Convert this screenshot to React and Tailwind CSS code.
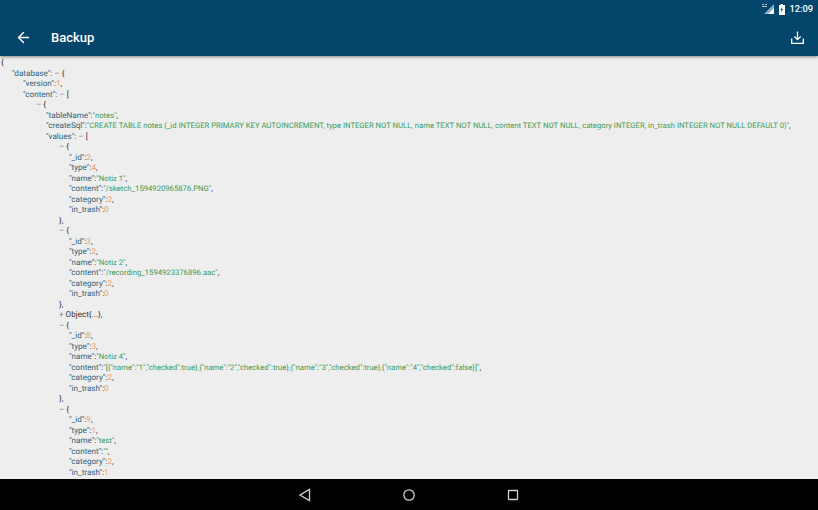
import { ArrowLeft } from 'lucide-react'

/* ─── Json tokens ───────────────────────────────────────────────── */
const K = ({ children }) => <span className="text-[#2f5f78]">"{children}"</span>
const N = ({ children }) => <span className="text-[#ee9c62]">{children}</span>
const S = ({ children }) => <span className="text-[7.7px] text-[#3f9a55]">"{children}"</span>
const Dash = () => <span className="text-[#777777]">– </span>

const Row = ({ className, children }) => (
  <div className={`h-[10.5px] leading-[10.5px] whitespace-nowrap ${className}`}>{children}</div>
)

const Field = ({ k, children, last }) => (
  <Row className="pl-[69px]">
    <K>{k}</K>:{children}{last ? '' : ','}
  </Row>
)

const Note = ({ id, type, name, content, inTrash }) => (
  <>
    <Row className="pl-[59px]"><Dash />{'{'}</Row>
    <Field k="_id"><N>{id}</N></Field>
    <Field k="type"><N>{type}</N></Field>
    <Field k="name"><S>{name}</S></Field>
    <Field k="content"><S>{content}</S></Field>
    <Field k="category"><N>2</N></Field>
    <Field k="in_trash" last><N>{inTrash}</N></Field>
  </>
)

const StatusIcons = () => (
  <svg width="23" height="12" viewBox="0 0 23 12" fill="none">
    <path d="M0 1h2v1H0zM3 1h2v1H3zM0 3h5v1H0z" fill="#b8c6d0" />
    <path d="M12 1v10H2z" fill="#ffffff" opacity="0.55" />
    <path d="M12 5v6H6z" fill="#ffffff" />
    <path d="M17 2h1.5V1h2.5v1H23v10h-6z" fill="#ffffff" />
    <path d="M20.2 3.5l-1.6 3.6h1.1l-.5 3 1.9-3.8h-1.1z" fill="#03456b" />
  </svg>
)

export default function App() {
  return (
    <div className="w-[818px] h-[510px] flex flex-col overflow-hidden bg-[#eeeeee] font-['Roboto',sans-serif]">
      {/* Status bar + toolbar */}
      <div className="relative z-10 h-[56px] flex-none bg-[#03456b] shadow-[0_1px_3px_rgba(0,0,0,0.45)] text-white">
        <div className="h-[18px] flex items-center justify-end gap-[4px] pr-[5px]">
          <StatusIcons />
          <span className="text-[9.3px] leading-none font-medium">12:09</span>
        </div>
        <div className="h-[38px] flex items-center pl-[15px] pr-[14px] pt-[1px]">
          <ArrowLeft size={17} strokeWidth={2} />
          <span className="ml-[19px] text-[13px] font-medium leading-none">Backup</span>
          <svg className="ml-auto" width="13" height="13" viewBox="0 0 13 13" fill="none" stroke="#ffffff" strokeWidth="1.3">
            <path d="M6.5 0.5v8M3.3 5.5l3.2 3.2 3.2-3.2" />
            <path d="M0.7 7.5v4.8h11.6V7.5" />
          </svg>
        </div>
      </div>

      {/* Json dump */}
      <div className="flex-1 min-h-0 overflow-hidden pt-[1px] text-[8.1px] [text-rendering:geometricPrecision] text-[#333333]">
        <Row className="pl-[1px]">{'{'}</Row>
        <Row className="pl-[12px]"><K>database</K>: <Dash />{'{'}</Row>
        <Row className="pl-[23px]"><K>version</K>:<N>1</N>,</Row>
        <Row className="pl-[23px]"><K>content</K>: <Dash />[</Row>
        <Row className="pl-[36px]"><Dash />{'{'}</Row>
        <Row className="pl-[46px]"><K>tableName</K>:<S>notes</S>,</Row>
        <Row className="pl-[46px]">
          <K>createSql</K>:<S>CREATE TABLE notes (_id INTEGER PRIMARY KEY AUTOINCREMENT, type INTEGER NOT NULL, name TEXT NOT NULL, content TEXT NOT NULL, category INTEGER, in_trash INTEGER NOT NULL DEFAULT 0)</S>,
        </Row>
        <Row className="pl-[46px]"><K>values</K>: <Dash />[</Row>
        <Note id="2" type="4" name="Notiz 1" content="/sketch_1594920965876.PNG" inTrash="0" />
        <Row className="pl-[59px]">{'},'}</Row>
        <Note id="3" type="2" name="Notiz 2" content="/recording_1594923376896.aac" inTrash="0" />
        <Row className="pl-[59px]">{'},'}</Row>
        <Row className="pl-[59px]"><span className="text-[#777777]">+ </span>Object{'{...},'}</Row>
        <Note id="8" type="3" name="Notiz 4" content={'[{"name":"1","checked":true},{"name":"2","checked":true},{"name":"3","checked":true},{"name":"4","checked":false}]'} inTrash="0" />
        <Row className="pl-[59px]">{'},'}</Row>
        <Note id="9" type="1" name="test" content="" inTrash="1" />
      </div>

      {/* Nav bar */}
      <div className="h-[31px] flex-none bg-black flex items-center justify-center gap-[82px]">
        <svg width="22" height="14" viewBox="0 0 22 14" fill="none" stroke="#d0d0d0" strokeWidth="1.3">
          <path d="M15.5 1.5v11L6 7z" />
        </svg>
        <svg width="22" height="14" viewBox="0 0 22 14" fill="none" stroke="#d0d0d0" strokeWidth="1.3">
          <circle cx="11" cy="7" r="5.2" />
        </svg>
        <svg width="22" height="14" viewBox="0 0 22 14" fill="none" stroke="#d0d0d0" strokeWidth="1.3">
          <rect x="6.5" y="2.5" width="9" height="9" rx="0.5" />
        </svg>
      </div>
    </div>
  )
}
